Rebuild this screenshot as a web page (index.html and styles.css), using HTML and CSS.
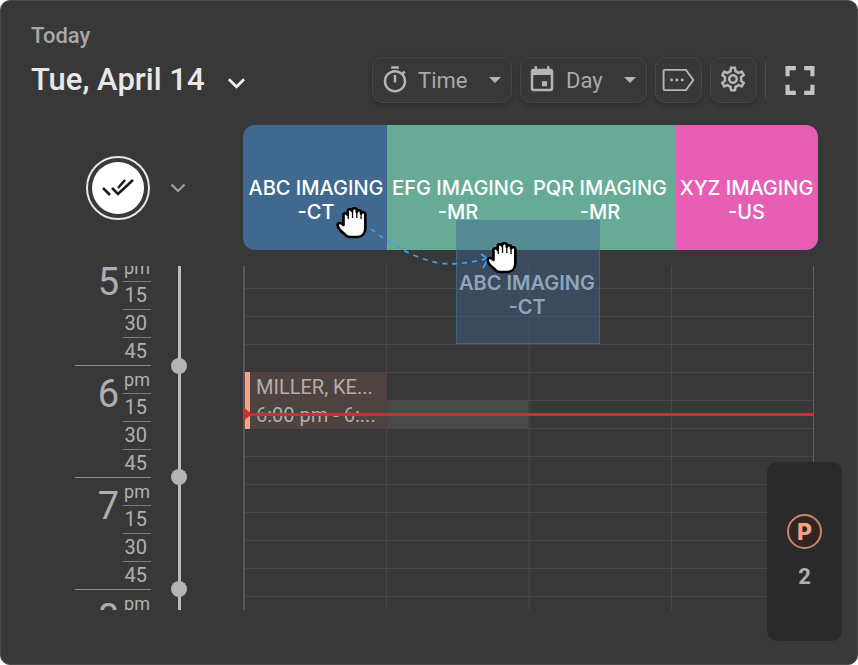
FILE: index.html
```html
<!DOCTYPE html>
<html lang="en">
<head>
<meta charset="utf-8">
<title>Schedule</title>
<link rel="stylesheet" href="styles.css">
</head>
<body>
<main class="panel">
  <header class="top">
    <div class="date">
      <div class="today">Today</div>
      <div class="title">Tue, April 14
        <svg class="title-chev" viewBox="0 0 20 12"><path d="M2 2l8 8 8-8"/></svg>
      </div>
    </div>
    <div class="tools">
      <button class="btn btn-time">
        <svg class="ico" viewBox="0 0 24 24"><path d="M15 1H9v2h6V1zm-4 13h2V8h-2v6zm8.03-6.61l1.42-1.42c-.43-.51-.9-.99-1.41-1.41l-1.42 1.42C16.07 4.74 14.12 4 12 4c-4.97 0-9 4.03-9 9s4.02 9 9 9 9-4.03 9-9c0-2.12-.74-4.07-1.97-5.61zM12 20c-3.87 0-7-3.13-7-7s3.13-7 7-7 7 3.13 7 7-3.13 7-7 7z"/></svg>
        <span class="btn-label">Time</span><span class="caret"></span>
      </button>
      <button class="btn btn-day">
        <svg class="ico" viewBox="0 0 24 24"><path d="M19 3h-1V1h-2v2H8V1H6v2H5c-1.11 0-1.99.9-1.99 2L3 19c0 1.1.89 2 2 2h14c1.1 0 2-.9 2-2V5c0-1.1-.9-2-2-2zm0 16H5V8h14v11zM12 13h4v4h-4z"/></svg>
        <span class="btn-label">Day</span><span class="caret"></span>
      </button>
      <button class="btn btn-square">
        <svg class="ico-tag" viewBox="0 0 32 24"><path class="tag-outline" d="M2.500 2.500h20l7 9.500-7 9.500h-20a1 1 0 0 1-1-1v-17a1 1 0 0 1 1-1z"/><circle cx="9" cy="12" r="1.400"/><circle cx="14" cy="12" r="1.400"/><circle cx="19" cy="12" r="1.400"/></svg>
      </button>
      <button class="btn btn-square btn-gear">
        <svg class="ico" viewBox="0 0 24 24"><path d="M19.430 12.980c.04-.32.07-.64.07-.98 0-.34-.03-.66-.07-.98l2.110-1.650c.19-.15.24-.42.12-.64l-2-3.460c-.09-.16-.26-.25-.44-.25-.06 0-.12.01-.17.03l-2.490 1c-.52-.4-1.080-.73-1.690-.98l-.38-2.650C14.460 2.180 14.250 2 14 2h-4c-.25 0-.46.18-.49.42l-.38 2.650c-.61.25-1.170.59-1.690.98l-2.490-1c-.06-.02-.12-.03-.18-.03-.17 0-.34.09-.43.25l-2 3.460c-.13.22-.07.49.12.64l2.110 1.650c-.04.32-.07.65-.07.98 0 .33.03.66.07.98l-2.110 1.650c-.19.15-.24.42-.12.64l2 3.460c.09.16.26.25.44.25.06 0 .12-.01.17-.03l2.490-1c.52.4 1.080.73 1.690.98l.38 2.650c.03.24.24.42.49.42h4c.25 0 .46-.18.49-.42l.38-2.650c.61-.25 1.170-.59 1.690-.98l2.490 1c.06.02.12.03.18.03.17 0 .34-.09.43-.25l2-3.460c.12-.22.07-.49-.12-.64l-2.110-1.650zm-1.980-1.710c.04.31.05.52.05.73 0 .21-.02.43-.05.73l-.14 1.130.89.7 1.080.84-.7 1.210-1.270-.51-1.040-.42-.9.68c-.43.32-.84.56-1.250.73l-1.060.43-.16 1.130-.2 1.350h-1.400l-.19-1.350-.16-1.130-1.060-.43c-.43-.18-.83-.41-1.230-.71l-.91-.7-1.060.43-1.270.51-.7-1.210 1.080-.84.89-.7-.14-1.130c-.03-.31-.05-.54-.05-.74s.02-.43.05-.73l.14-1.130-.89-.7-1.080-.84.7-1.210 1.270.51 1.040.42.9-.68c.43-.32.84-.56 1.250-.73l1.060-.43.16-1.130.2-1.350h1.390l.19 1.350.16 1.130 1.060.43c.43.18.83.41 1.230.71l.91.7 1.060-.43 1.270-.51.7 1.210-1.070.85-.89.7.14 1.130zM12 8c-2.210 0-4 1.790-4 4s1.790 4 4 4 4-1.790 4-4-1.790-4-4-4zm0 6c-1.100 0-2-.9-2-2s.9-2 2-2 2 .9 2 2-.9 2-2 2z"/></svg>
      </button>
      <span class="divider"></span>
      <svg class="ico-full" viewBox="5 5 14 14"><path d="M7 14H5v5h5v-2H7v-3zm-2-4h2V7h3V5H5v5zm12 7h-3v2h5v-5h-2v3zM14 5v2h3v3h2V5h-5z"/></svg>
    </div>
  </header>

  <section class="columns">
    <div class="status">
      <span class="check-ring">
        <span class="check-fill">
          <svg class="check-ico" viewBox="0 0 32 17"><path d="M1 9l7 7M10 9l6 6L31 1M16 9l7-8"/></svg>
        </span>
      </span>
      <svg class="status-chev" viewBox="0 0 16 10"><path d="M1.500 1.500L8 8l6.500-6.500"/></svg>
    </div>
    <div class="heads">
      <div class="head head-a head-blue">ABC IMAGING<br>-CT</div>
      <div class="head head-b head-green">EFG IMAGING<br>-MR</div>
      <div class="head head-c head-green">PQR IMAGING<br>-MR</div>
      <div class="head head-d head-pink">XYZ IMAGING<br>-US</div>
    </div>
  </section>

  <section class="body">
    <div class="gutter">
      <div class="hours">
        <div class="hour"><span class="num">5</span><div class="quarters"><span>pm</span><span>15</span><span>30</span><span>45</span></div></div>
        <div class="hour"><span class="num">6</span><div class="quarters"><span>pm</span><span>15</span><span>30</span><span>45</span></div></div>
        <div class="hour"><span class="num">7</span><div class="quarters"><span>pm</span><span>15</span><span>30</span><span>45</span></div></div>
        <div class="hour"><span class="num">8</span><div class="quarters"><span>pm</span><span>15</span><span>30</span><span>45</span></div></div>
      </div>
      <div class="rail">
        <span class="rail-dot"></span><span class="rail-dot"></span><span class="rail-dot"></span>
      </div>
    </div>
    <div class="grid">
      <div class="event">
        <div class="event-line">MILLER, KE...</div>
        <div class="event-line">6:00 pm - 6:...</div>
      </div>
      <div class="slot"></div>
      <div class="now"></div>
    </div>
  </section>

  <div class="ghost">ABC IMAGING<br>-CT</div>

  <svg class="drag-path" viewBox="0 0 150 60"><path class="dash" d="M7 4C20 14 45 32 74 38C90 40 105 38 122 34"/><path class="arrow" d="M117 29l7 5-5 9"/></svg>

  <svg class="hand hand-a" viewBox="0 0 30 33" preserveAspectRatio="none"><path class="hand-body" d="M8 28C5 26 1.500 22 1.500 19C1.500 16.500 5 16 7 19V9C7 6.500 10.500 6.500 11 9V5C11 2.500 15 2.500 15 5V4C15 1.500 19.500 1.500 19.500 4V6C19.500 3.500 23.500 3.500 23.500 6V7.500C24.500 5.500 27.500 6 27.500 8.500V22C27.500 28 24 31 20 31H13C11 31 9.500 30 8 28Z"/><path class="hand-gap" d="M11.500 8V13M15.500 5V12M19.500 5V12M23.500 6V13"/></svg>
  <svg class="hand hand-b" viewBox="0 0 30 33" preserveAspectRatio="none"><path class="hand-body" d="M8 28C5 26 1.500 22 1.500 19C1.500 16.500 5 16 7 19V9C7 6.500 10.500 6.500 11 9V5C11 2.500 15 2.500 15 5V4C15 1.500 19.500 1.500 19.500 4V6C19.500 3.500 23.500 3.500 23.500 6V7.500C24.500 5.500 27.500 6 27.500 8.500V22C27.500 28 24 31 20 31H13C11 31 9.500 30 8 28Z"/><path class="hand-gap" d="M11.500 8V13M15.500 5V12M19.500 5V12M23.500 6V13"/></svg>

  <aside class="pending">
    <span class="p-badge">P</span>
    <span class="p-count">2</span>
  </aside>
</main>
</body>
</html>
```
FILE: styles.css
```css
* { box-sizing: border-box; }
html, body { margin: 0; padding: 0; background: #fff; }
.panel {
  position: relative;
  width: 858px;
  height: 665px;
  background: #383838;
  border: 1px solid #4a4a4a;
  border-radius: 10px;
  overflow: hidden;
  font-family: Roboto, sans-serif;
  color: #bdbdbd;
}
.top {
  display: flex;
  justify-content: space-between;
  align-items: flex-start;
  height: 124px;
  padding: 21px 42px 0 30px;
}
.today { font-size: 22px; font-weight: 500; line-height: 28px; color: #a8a8a8; }
.title {
  display: flex;
  align-items: center;
  gap: 22px;
  margin-top: 12px;
  font-size: 31px;
  font-weight: 500;
  line-height: 36px;
  color: #e8e8e8;
}
.title-chev { width: 19px; height: 12px; margin-top: 5px; }
.title-chev path { fill: none; stroke: #eee; stroke-width: 2.800; }
.tools { display: flex; align-items: center; gap: 8px; margin-top: 35px; }
.btn {
  display: flex;
  align-items: center;
  height: 46px;
  padding: 0 7px;
  background: #383838;
  border: 1px solid #464646;
  border-radius: 10px;
  box-shadow: 0 2px 5px rgba(0,0,0,.25);
  font: 400 22px Roboto, sans-serif;
  color: #a9a9a9;
}
.btn-time { width: 140px; }
.btn-day { width: 127px; padding-left: 6px; }
.btn-time .btn-label { margin-left: 8px; }
.btn-day .btn-label { margin-left: 9px; }
.btn-square { width: 47px; justify-content: center; padding: 0; }
.btn-gear { padding: 0 2px 2px 0; }
.ico { width: 30px; height: 30px; fill: #b5b5b5; flex: none; }
.ico-tag { width: 34px; height: 26px; flex: none; fill: #b5b5b5; }
.tag-outline { fill: none; stroke: #b5b5b5; stroke-width: 1.800; stroke-linejoin: round; }
.caret {
  margin-left: auto;
  margin-right: 3px;
  border-style: solid;
  border-width: 6px 6px 0;
  border-color: #b5b5b5 transparent transparent;
}
.divider { width: 1px; height: 36px; background: #4c4c4c; }
.ico-full { width: 30px; height: 29px; fill: #c4c4c4; margin-left: 11px; }

.columns { display: flex; height: 125px; }
.status { width: 242px; display: flex; align-items: center; padding-left: 85px; }
.check-ring {
  display: flex;
  align-items: center;
  justify-content: center;
  width: 64px;
  height: 64px;
  border: 2px solid #e6e6e6;
  border-radius: 50%;
}
.check-fill {
  display: flex;
  align-items: center;
  justify-content: center;
  width: 52px;
  height: 52px;
  background: #fff;
  border-radius: 50%;
}
.check-ico { width: 32px; height: 17px; }
.check-ico path { fill: none; stroke: #1c1c1c; stroke-width: 2.600; }
.status-chev { width: 16px; height: 10px; margin-left: 20px; }
.status-chev path { fill: none; stroke: #a0a0a0; stroke-width: 2.200; }
.heads {
  display: flex;
  width: 575px;
  border-radius: 12px;
  overflow: hidden;
}
.head {
  flex: none;
  padding-top: 51px;
  text-align: center;
  font: 500 20px/24px Inter, sans-serif;
  color: #fff;
  white-space: nowrap;
}
.head-a { width: 144px; padding-left: 2px; }
.head-b { width: 142px; }
.head-c { width: 146px; padding-right: 4px; }
.head-d { width: 143px; }
.head-blue { background: #41698f; }
.head-green { background: #67ab97; }
.head-pink { background: #e65fb4; }

.body { display: flex; height: 344px; margin-top: 16px; }
.gutter { position: relative; width: 242px; overflow: hidden; }
.hours { margin-top: -12px; padding-left: 74px; width: 150px; }
.hour {
  display: flex;
  justify-content: flex-end;
  height: 112px;
  border-bottom: 1.500px solid #8c8c8c;
}
.num { font-size: 38px; font-weight: 400; line-height: 40px; margin: 8px 4px 0 0; color: #aeaeae; }
.quarters { width: 28px; display: flex; flex-direction: column; }
.quarters span {
  flex: none;
  height: 28px;
  font-size: 20px;
  line-height: 27px;
  text-align: right;
  padding-right: 4px;
  color: #b0b0b0;
  border-bottom: 1.500px solid #7c7c7c;
}
.quarters span:last-child { border-bottom: 0; }
.quarters span:first-child { padding-right: 1px; font-size: 18px; }
.rail {
  position: absolute;
  left: 177px;
  top: 0;
  bottom: 0;
  width: 3px;
  background: #bcbcbc;
}
.rail-dot {
  position: absolute;
  left: -7px;
  width: 16px;
  height: 16px;
  border-radius: 50%;
  background: #b4b4b4;
}
.rail-dot:nth-child(1) { top: 92px; }
.rail-dot:nth-child(2) { top: 203px; }
.rail-dot:nth-child(3) { top: 315px; }
.grid {
  position: relative;
  width: 571px;
  border-left: 2px solid #575757;
  background-image:
    linear-gradient(#484848 0 1px, transparent 1px),
    linear-gradient(90deg, #484848 0 1px, transparent 1px);
  background-size: 100% 28px, 142.500px 100%;
  background-position: 0 22px, 141px 0;
}
.grid::after {
  content: "";
  position: absolute;
  right: 0;
  top: 0;
  bottom: 0;
  width: 1px;
  background: #606060;
}
.event {
  position: absolute;
  left: 0;
  top: 106px;
  width: 142px;
  height: 57px;
  padding: 1px 0 0 6px;
  background: #4e4340;
  border-left: 5px solid #f9a081;
  font-size: 20px;
  line-height: 28px;
  color: #b4adaa;
  white-space: nowrap;
}
.slot {
  position: absolute;
  left: 142px;
  top: 135px;
  width: 141px;
  height: 28px;
  background: #494949;
}
.now {
  position: absolute;
  left: -1px;
  right: 0;
  top: 147px;
  height: 2.500px;
  background: #c43333;
}
.now::before {
  content: "";
  position: absolute;
  left: -1px;
  top: -6px;
  border-style: solid;
  border-width: 7px 0 7px 9px;
  border-color: transparent transparent transparent #c43333;
}

.ghost {
  position: absolute;
  left: 455px;
  top: 219px;
  width: 144px;
  height: 124px;
  padding: 50px 2px 0 0;
  border: 1px solid rgba(80,135,180,.4);
  background: rgba(65,100,140,.45);
  text-align: center;
  font: 600 20px/24px Inter, sans-serif;
  color: #8ea5bb;
  white-space: nowrap;
}
.drag-path { position: absolute; left: 363px; top: 224px; width: 150px; height: 60px; overflow: visible; }
.dash { fill: none; stroke: #3d9fee; stroke-width: 1.800; stroke-dasharray: 5 5; }
.arrow { fill: none; stroke: #3d9fee; stroke-width: 1.800; }
.hand { position: absolute; width: 32px; height: 33px; }
.hand-a { left: 335px; top: 205px; }
.hand-b { left: 485px; top: 240px; }
.hand-body { fill: #fff; stroke: #000; stroke-width: 2.500; stroke-linejoin: round; }
.hand-gap { fill: none; stroke: #000; stroke-width: 1.200; }

.pending {
  position: absolute;
  left: 766px;
  top: 461px;
  width: 75px;
  height: 179px;
  display: flex;
  flex-direction: column;
  align-items: center;
  padding-top: 52px;
  background: #2a2a2a;
  border-radius: 10px;
}
.p-badge {
  width: 35px;
  height: 35px;
  display: flex;
  align-items: center;
  justify-content: center;
  border: 2px solid #d08366;
  border-radius: 50%;
  background: #2f2524;
  color: #f9a081;
  font: 800 23px Inter, sans-serif;
}
.p-count { margin-top: 15px; font-size: 22px; font-weight: 700; line-height: 26px; color: #b0b0b0; }
```
